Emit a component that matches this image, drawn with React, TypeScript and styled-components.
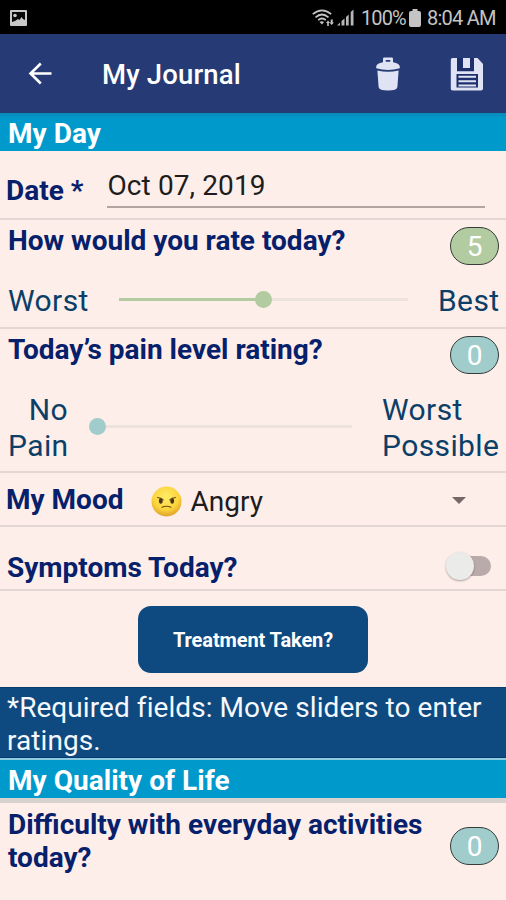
import React from "react";
import styled, { createGlobalStyle } from "styled-components";

const GlobalStyle = createGlobalStyle`
  * { box-sizing: border-box; }
  body { margin: 0; background: #fdeeea; font-family: Roboto, "Liberation Sans", sans-serif; }
  button { font: inherit; border: 0; padding: 0; background: none; color: inherit; display: block; }
  svg { display: block; flex: none; }
`;

const Screen = styled.main`
  width: 506px;
  height: 900px;
  overflow: hidden;
  background: #fdeeea;
  display: flex;
  flex-direction: column;
  white-space: nowrap;
`;

const StatusBar = styled.header`
  height: 34px;
  flex: none;
  display: flex;
  align-items: center;
  justify-content: space-between;
  padding: 1px 11px 0 10px;
  background: #000;
  color: #c4c4c4;
`;

const StatusInfo = styled.div`
  display: flex;
  align-items: center;
`;

const StatusText = styled.span<{ $width: number; $spacing: number }>`
  width: ${(p) => p.$width}px;
  margin-left: 6px;
  font-size: 20px;
  line-height: 34px;
  letter-spacing: ${(p) => p.$spacing}px;
`;

const AppBar = styled.nav`
  height: 79px;
  flex: none;
  display: flex;
  align-items: center;
  padding: 0 22px 0 28px;
  background: #263b75;
  color: #fff;
`;

const Title = styled.h1`
  flex: 1;
  margin: 2px 0 0 50px;
  font-size: 27.5px;
  line-height: 32px;
  font-weight: 500;
  letter-spacing: 0.15px;
`;

const IconButton = styled.button<{ $gap?: number }>`
  margin-left: ${(p) => p.$gap ?? 0}px;
`;

const Band = styled.h2<{ $raised?: boolean }>`
  height: 38px;
  flex: none;
  margin: 0;
  padding: 5px 8px 0;
  font-size: 28px;
  line-height: 32px;
  font-weight: 700;
  letter-spacing: 0.03px;
  color: #fff;
  background: ${(p) => (p.$raised ? "#0099cc" : "linear-gradient(#078bb9, #0099cc 6px)")};
`;

const BandShadow = styled.div`
  flex: none;
  height: 5px;
  background: #d8d2cf;
`;

const Section = styled.section<{ $height: number }>`
  height: ${(p) => p.$height}px;
  flex: none;
  border-bottom: 2px solid #e2d7d3;
  padding: 0 7px 0 8px;
`;

const InlineSection = styled(Section)`
  display: flex;
  align-items: flex-start;
`;

const Heading = styled.div`
  display: flex;
  justify-content: space-between;
  align-items: flex-start;
`;

const Label = styled.label<{ $top: number; $shift?: number }>`
  margin-top: ${(p) => p.$top}px;
  margin-left: ${(p) => p.$shift ?? 0}px;
  font-size: 28px;
  line-height: 33px;
  font-weight: 700;
  color: #07206b;
`;

const Badge = styled.output<{ $color: string; $top: number }>`
  margin-top: ${(p) => p.$top}px;
  width: 49px;
  height: 38px;
  border: 1.4px solid #353c39;
  border-radius: 19px;
  background: ${(p) => p.$color};
  color: #fff;
  font-size: 28px;
  line-height: 38px;
  text-align: center;
`;

const DateField = styled.div`
  width: 378px;
  height: 57px;
  margin-left: 24px;
  padding-top: 18px;
  border-bottom: 2px solid #b3a4a2;
  font-size: 28px;
  line-height: 33px;
  letter-spacing: 0.1px;
  color: #201c1c;
`;

const SliderRow = styled.div`
  display: flex;
  align-items: center;
  margin-top: 18px;
`;

const ScaleText = styled.span<{ $width: number; $align?: string }>`
  width: ${(p) => p.$width}px;
  font-size: 30px;
  line-height: 36px;
  letter-spacing: 0.4px;
  color: #0c3f67;
  text-align: ${(p) => p.$align ?? "left"};
`;

const Track = styled.div<{ $fill: number; $color: string; $width: number; $left: number; $right: number; $lift: number }>`
  position: relative;
  width: ${(p) => p.$width}px;
  height: 3px;
  margin: 0 ${(p) => p.$right}px ${(p) => p.$lift}px ${(p) => p.$left}px;
  background: linear-gradient(90deg, ${(p) => p.$color} ${(p) => p.$fill}%, #ede3dc ${(p) => p.$fill}%);
`;

const Thumb = styled.span<{ $at: number; $color: string }>`
  position: absolute;
  top: -7px;
  left: calc(${(p) => p.$at}% - 8.5px);
  width: 17px;
  height: 17px;
  border-radius: 50%;
  background: ${(p) => p.$color};
`;

const MoodPicker = styled.div`
  display: flex;
  align-items: center;
  flex: 1;
  height: 33px;
  margin: 12px 0 0 28px;
  color: #201c1c;
`;

const MoodName = styled.span`
  flex: 1;
  margin-left: 8px;
  font-size: 28px;
  line-height: 33px;
`;

const Caret = styled.span`
  margin: -3px 33px 0 0;
  border: 7px solid transparent;
  border-top: 7px solid #766866;
  border-bottom: 0;
`;

const Switch = styled.div`
  position: relative;
  width: 35px;
  height: 20px;
  margin: 29px 8px 0 auto;
  border-radius: 10px;
  background: #b9aba9;
`;

const Knob = styled.span`
  position: absolute;
  left: -10px;
  top: -4px;
  width: 28px;
  height: 28px;
  border-radius: 50%;
  background: #ebebe9;
  box-shadow: 0 1px 2px rgba(60, 40, 40, 0.4);
`;

const Actions = styled.div`
  height: 96px;
  flex: none;
  display: flex;
  justify-content: center;
  padding-top: 15px;
`;

const TreatmentButton = styled.button`
  width: 230px;
  height: 67px;
  border-radius: 13px;
  background: #0e4a80;
  color: #fff;
  font-size: 20px;
  font-weight: 700;
  letter-spacing: -0.1px;
  text-align: center;
`;

const Note = styled.p`
  height: 71px;
  flex: none;
  margin: 0 0 2px;
  padding: 3px 7px 0;
  background: #0e4a80;
  border-top: 1px solid #083b70;
  border-bottom: 1px solid #083b70;
  color: #f5f8fc;
  font-size: 28px;
  line-height: 33px;
  letter-spacing: 0.07px;
  box-shadow: 0 2px 0 #8fcbe0;
`;

const PhotoIcon = () => (
  <svg width="17" height="16" viewBox="0 0 17 16">
    <rect width="17" height="16" rx="1" fill="#c8c8c8" />
    <path d="M2 2h13v8l-2-1-1.500-2-2 3-1.500-1-3 2-3 1z" fill="#080808" />
    <circle cx="5" cy="5.500" r="1.800" fill="#c8c8c8" />
  </svg>
);

const WifiIcon = () => (
  <svg width="23" height="18" viewBox="0 0 23 18" fill="none" stroke="#c4c4c4" strokeWidth="1.700">
    <path d="M.8 5.200Q10 -2.500 19.200 5.200M3.500 8.300Q10 2.700 16.500 8.300M6.200 11.200Q10 7.800 13.800 11.200" />
    <path d="M7.500 13Q10 11.500 12 13L10 15.500z" fill="#c4c4c4" stroke="none" />
    <path d="M14 14l2-2.500 2 2.500h-1.200v3h-1.600v-3zM18.700 10.500v3h-1.200l2.200 2.500 2.200-2.500h-1.200v-3z" fill="#c4c4c4" stroke="none" />
  </svg>
);

const SignalIcon = () => (
  <svg width="20" height="17" viewBox="-2 0 20 17" fill="#b6b6b6">
    <path d="M0 16.500l3-3v3zM4.500 12l3-2.500v7h-3zM9 8l2.700-2.500v11H9zM13.700 3L16.500.5v16h-2.800z" />
  </svg>
);

const BatteryIcon = () => (
  <svg width="16" height="18" viewBox="-4 0 16 18" fill="#c4c4c4">
    <path d="M3.500 0h5v2h1.500q2 0 2 2v12q0 2-2 2H2q-2 0-2-2V4q0-2 2-2h1.500z" />
  </svg>
);

const BackIcon = () => (
  <svg width="24" height="23" viewBox="0 0 24 23" fill="none" stroke="#fff" strokeWidth="2.600">
    <path d="M23.500 11.500H2.500M12.800 1.500L2.500 11.500l10.300 10" />
  </svg>
);

const TrashIcon = () => (
  <svg width="26" height="35" viewBox="0 -1 26 35" fill="#dfe3f4">
    <path fillRule="evenodd" d="M8 5.200V1.800Q8 .5 9.300.5h7.400Q18 .5 18 1.800v3.400q6.800 1.300 6.800 4.600v1.500Q19 13 13 13T1.200 11.300V9.800Q1.200 6.500 8 5.200zm2.700-.4h4.600V3h-4.600z" />
    <path d="M2.400 13.500Q13 16 23.600 13.500l-1.200 16.500q-.3 3.600-9.400 3.600T3.600 30z" />
  </svg>
);

const SaveIcon = () => (
  <svg width="34" height="34" viewBox="0 0 34 34">
    <path d="M2.500 1h25L33 7v24.500Q33 33.500 31 33.500H2.500Q.8 33.500.8 31.500V3Q.8 1 2.500 1z" fill="#dfe3f4" />
    <path d="M7 1h6v10h7V1h4v13.300H7zM6.500 17h21.500v13.500H6.500z" fill="#1d2f6c" />
    <path d="M8.500 19.700h17.500M8.500 24.200h17.500M8.500 28.500h17.500" stroke="#dfe3f4" strokeWidth="2.100" />
  </svg>
);

const AngryFace = () => (
  <svg width="31" height="31" viewBox="0 0 31 31">
    <defs>
      <radialGradient id="face" cx=".48" cy=".35" r=".65">
        <stop offset="0" stopColor="#ffed68" />
        <stop offset=".65" stopColor="#fbd43c" />
        <stop offset="1" stopColor="#dfa029" />
      </radialGradient>
    </defs>
    <circle cx="15.500" cy="15.500" r="15" fill="url(#face)" />
    <ellipse cx="9.800" cy="14.800" rx="1.900" ry="2.900" fill="#49331b" />
    <ellipse cx="21.200" cy="14.800" rx="1.900" ry="2.900" fill="#49331b" />
    <path d="M6.500 11.500q3.500.3 5.700 2.300M24.500 11.500q-3.500.3-5.700 2.300M11 21.200q4.500-2 9 0" fill="none" stroke="#6c4a1b" strokeWidth="1.100" strokeLinecap="round" />
  </svg>
);

const GREEN = "#b3cba0";
const TEAL = "#a0cccb";

export default function App() {
  return (
    <>
      <GlobalStyle />
      <Screen>
        <StatusBar>
          <PhotoIcon />
          <StatusInfo>
            <WifiIcon />
            <SignalIcon />
            <StatusText $width={44} $spacing={-0.9}>100%</StatusText>
            <BatteryIcon />
            <StatusText $width={68} $spacing={-0.75}>8:04 AM</StatusText>
          </StatusInfo>
        </StatusBar>
        <AppBar>
          <IconButton aria-label="Back"><BackIcon /></IconButton>
          <Title>My Journal</Title>
          <IconButton aria-label="Delete"><TrashIcon /></IconButton>
          <IconButton aria-label="Save" $gap={49}><SaveIcon /></IconButton>
        </AppBar>
        <Band>My Day</Band>
        <InlineSection $height={69}>
          <Label $top={23} $shift={-2}>Date *</Label>
          <DateField>Oct 07, 2019</DateField>
        </InlineSection>
        <Section $height={109}>
          <Heading>
            <Label $top={4}>How would you rate today?</Label>
            <Badge $color={GREEN} $top={7}>5</Badge>
          </Heading>
          <SliderRow>
            <ScaleText $width={82}>Worst</ScaleText>
            <Track $width={289} $left={29} $right={30} $lift={3} $fill={50} $color={GREEN}>
              <Thumb $at={50} $color={GREEN} />
            </Track>
            <ScaleText $width={61}>Best</ScaleText>
          </SliderRow>
        </Section>
        <Section $height={144}>
          <Heading>
            <Label $top={4}>Today’s pain level rating?</Label>
            <Badge $color={TEAL} $top={7}>0</Badge>
          </Heading>
          <SliderRow>
            <ScaleText $width={60} $align="right">No<br />Pain</ScaleText>
            <Track $width={255} $left={29} $right={30} $lift={4} $fill={0} $color={TEAL}>
              <Thumb $at={0.3} $color={TEAL} />
            </Track>
            <ScaleText $width={117}>Worst<br />Possible</ScaleText>
          </SliderRow>
        </Section>
        <InlineSection $height={54}>
          <Label $top={10} $shift={-2}>My Mood</Label>
          <MoodPicker>
            <AngryFace />
            <MoodName>Angry</MoodName>
            <Caret />
          </MoodPicker>
        </InlineSection>
        <InlineSection $height={64}>
          <Label $top={24} $shift={-1}>Symptoms Today?</Label>
          <Switch><Knob /></Switch>
        </InlineSection>
        <Actions>
          <TreatmentButton>Treatment Taken?</TreatmentButton>
        </Actions>
        <Note>*Required fields: Move sliders to enter<br />ratings.</Note>
        <Band $raised>My Quality of Life</Band>
        <BandShadow />
        <Section $height={109}>
          <Heading>
            <Label $top={5}>Difficulty with everyday activities<br />today?</Label>
            <Badge $color={TEAL} $top={24}>0</Badge>
          </Heading>
        </Section>
      </Screen>
    </>
  );
}
